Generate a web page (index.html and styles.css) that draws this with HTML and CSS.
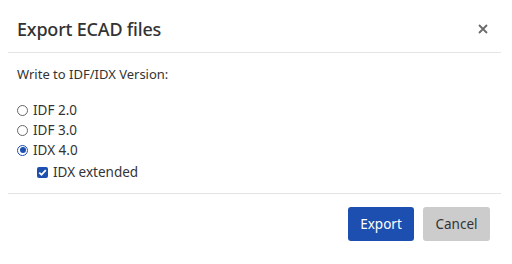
FILE: index.html
```html
<!DOCTYPE html>
<html>
<head>
<meta charset="utf-8">
<link rel="stylesheet" href="styles.css">
</head>
<body>
<div class="dialog">
  <div class="header">
    <div class="title">Export ECAD files</div>
    <svg class="close" width="10" height="10" viewBox="0 0 10 10"><path d="M1 1L9 9M9 1L1 9" stroke="#6b6b6b" stroke-width="1.8" fill="none"/></svg>
  </div>
  <div class="body">
    <div class="label">Write to IDF/IDX Version:</div>
    <div class="options">
      <label class="opt"><span class="radio"></span>IDF 2.0</label>
      <label class="opt"><span class="radio"></span>IDF 3.0</label>
      <label class="opt"><span class="radio on"></span>IDX 4.0</label>
      <label class="opt sub"><span class="check"><svg width="11" height="11" viewBox="0 0 11 11"><path d="M2.3 5.6L4.5 7.8L8.8 3.2" stroke="#fff" stroke-width="1.8" fill="none"/></svg></span>IDX extended</label>
    </div>
  </div>
  <div class="footer">
    <button class="btn primary">Export</button>
    <button class="btn secondary">Cancel</button>
  </div>
</div>
</body>
</html>
```
FILE: styles.css
```css
html, body { margin: 0; padding: 0; background: #fff; }
body { font-family: "Noto Sans", "Open Sans", sans-serif; color: #333; width: 512px; height: 264px; overflow: hidden; }
.dialog { width: 493px; margin-left: 8px; }
.header { height: 53px; box-sizing: border-box; display: flex; align-items: center; justify-content: space-between; padding: 6px 13px 0 9px; border-bottom: 1px solid #e4e4e4; }
.title { font-size: 18px; font-weight: 500; color: #333; letter-spacing: -0.2px; }
.close { display: block; margin-top: -1px; }
.body { padding: 12px 9px 0; height: 141px; box-sizing: border-box; border-bottom: 1px solid #e4e4e4; }
.label { font-size: 13px; line-height: 18px; color: #333; }
.options { margin-top: 17px; }
.opt { display: flex; align-items: center; font-size: 13.5px; line-height: 20px; height: 20px; color: #333; }
.opt.sub { margin-top: 2px; padding-left: 20px; }
.radio { width: 9px; height: 9px; border: 1px solid #666; border-radius: 50%; margin: 0 5px 0 0; box-sizing: content-box; position: relative; }
.radio.on { border-color: #1c4fb0; }
.radio.on::after { content: ""; position: absolute; left: 1.5px; top: 1.5px; width: 6px; height: 6px; border-radius: 50%; background: #1c4fb0; }
.check { width: 11px; height: 11px; background: #1c4fb0; border-radius: 2px; margin-right: 5px; display: flex; }
.footer { display: flex; justify-content: flex-end; gap: 9px; padding: 13px 11px 0 0; }
.btn { font-family: inherit; font-size: 13.5px; height: 34px; border: none; border-radius: 3px; padding: 0; cursor: pointer; }
.btn.primary { width: 66px; background: #1c4fb0; color: #fff; }
.btn.secondary { width: 67px; background: #cccccc; color: #333; }
```
